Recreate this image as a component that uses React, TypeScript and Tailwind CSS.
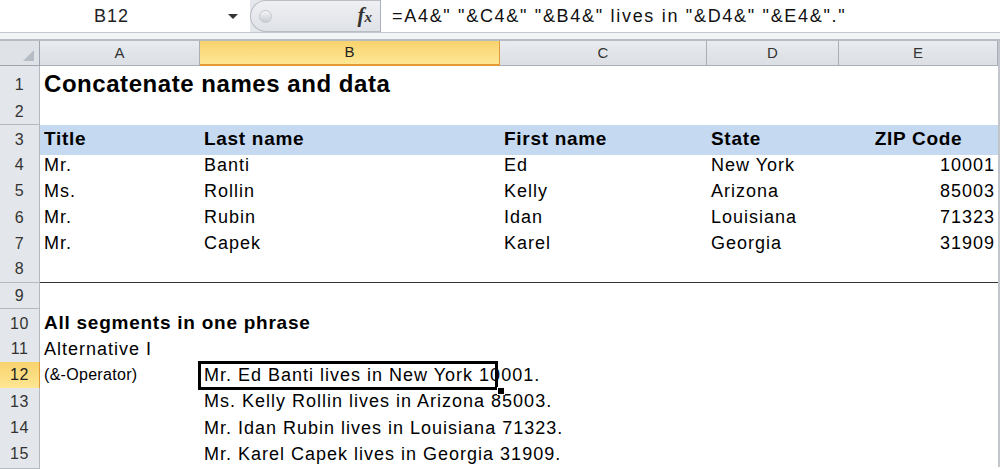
import React from 'react';

const font = { fontFamily: '"Liberation Sans", Arial, sans-serif' };

const cols = ['A', 'B', 'C', 'D', 'E'];
const gridCols = 'grid grid-cols-[40px_160px_300px_207px_132px_159px]';

type Cell = { text?: string; cls?: string; align?: 'right' | 'center' };

const body = 'text-[18px] tracking-[1px] pb-[1px]';
const head = 'font-bold text-[19px] tracking-[0.7px] pb-[1px]';

const rows: { h: string; cells: Cell[]; rowCls?: string; selected?: boolean }[] = [
  { h: 'h-[33px]', cells: [{ text: 'Concatenate names and data', cls: 'text-[24px] font-bold tracking-[0.55px] pb-[3px]' }] },
  { h: 'h-[26.3px]', cells: [] },
  {
    h: 'h-[26.3px]',
    rowCls: 'bg-[#c5d9f1]',
    cells: [
      { text: 'Title', cls: head },
      { text: 'Last name', cls: head },
      { text: 'First name', cls: head },
      { text: 'State', cls: head },
      { text: 'ZIP Code', cls: head, align: 'center' },
    ],
  },
  { h: 'h-[26.3px]', cells: [{ text: 'Mr.' }, { text: 'Banti' }, { text: 'Ed' }, { text: 'New York' }, { text: '10001', align: 'right' }] },
  { h: 'h-[26.3px]', cells: [{ text: 'Ms.' }, { text: 'Rollin' }, { text: 'Kelly' }, { text: 'Arizona' }, { text: '85003', align: 'right' }] },
  { h: 'h-[26.3px]', cells: [{ text: 'Mr.' }, { text: 'Rubin' }, { text: 'Idan' }, { text: 'Louisiana' }, { text: '71323', align: 'right' }] },
  { h: 'h-[26.3px]', cells: [{ text: 'Mr.' }, { text: 'Capek' }, { text: 'Karel' }, { text: 'Georgia' }, { text: '31909', align: 'right' }] },
  { h: 'h-[26.3px]', cells: [], rowCls: 'border-b border-[#333]' },
  { h: 'h-[26.3px]', cells: [] },
  { h: 'h-[26.3px]', cells: [{ text: 'All segments in one phrase', cls: 'font-bold text-[19px] tracking-[0.75px] pb-[1px]' }] },
  { h: 'h-[26.3px]', cells: [{ text: 'Alternative I' }] },
  {
    h: 'h-[26.3px]',
    selected: true,
    cells: [{ text: '(&-Operator)', cls: 'text-[16px] tracking-[0.3px] pb-[3px]' }, { text: 'Mr. Ed Banti lives in New York 10001.' }],
  },
  { h: 'h-[26.3px]', cells: [{}, { text: 'Ms. Kelly Rollin lives in Arizona 85003.' }] },
  { h: 'h-[26.3px]', cells: [{}, { text: 'Mr. Idan Rubin lives in Louisiana 71323.' }] },
  { h: 'h-[26.3px]', cells: [{}, { text: 'Mr. Karel Capek lives in Georgia 31909.' }] },
];

function FormulaBar() {
  return (
    <div className="flex h-[33px] bg-white border-b border-[#c3c8ce]">
      <div className="relative flex w-[250px] items-center pl-[94px] text-[18px] tracking-[1px] text-[#222]">
        B12
        <span className="absolute right-[12px] top-[14px] h-0 w-0 border-x-[5px] border-t-[5px] border-x-transparent border-t-[#333]" />
      </div>
      <div className="flex w-[130px] items-center bg-[#e4e7eb]">
        <div className="relative flex h-[32px] w-full items-center rounded-l-full border border-r-0 border-[#b9bec5] bg-gradient-to-b from-[#eef0f3] to-[#dfe2e7]">
          <span className="ml-[8px] h-[13px] w-[13px] rounded-full bg-gradient-to-b from-[#f4f5f7] to-[#c9cdd3] border border-[#c3c7cd]" />
          <span
            className="ml-auto mr-[8px] text-[21px] font-bold italic text-[#333]"
            style={{ fontFamily: '"Liberation Serif", "Times New Roman", serif' }}
          >
            f<span className="text-[15px]">x</span>
          </span>
        </div>
      </div>
      <div className="flex flex-1 items-center border-l border-[#aab0b8] pl-[11px] text-[18px] tracking-[1.7px] text-[#111]">
        =A4&amp;" "&amp;C4&amp;" "&amp;B4&amp;" lives in "&amp;D4&amp;" "&amp;E4&amp;"."
      </div>
    </div>
  );
}

export default function App() {
  return (
    <div className="w-[1000px] h-[469px] overflow-hidden bg-white" style={font}>
      <FormulaBar />
      <div className="h-[8px] bg-[#f3f4f6] border-b-2 border-[#b7bcc3]" />
      <div className="border-r-2 border-[#c2c6cc]">
        <div className={`${gridCols} h-[25px]`}>
          <div className="relative border-r border-b border-[#9ea5ae] bg-[#dfe3e8]">
            <svg className="absolute right-[5px] bottom-[4px]" width="11" height="11" viewBox="0 0 11 11">
              <polygon points="11,0 11,11 0,11" fill="#b6bcc4" />
            </svg>
          </div>
          {cols.map((c) => (
            <div
              key={c}
              className={
                c === 'B'
                  ? 'flex items-center justify-center border-r border-b-2 border-[#e39a37] bg-gradient-to-b from-[#f8d36c] to-[#fee795] text-[15px] text-[#222]'
                  : 'flex items-center justify-center border-r border-b border-[#a9afb7] bg-gradient-to-b from-[#e8ebef] to-[#dbdfe4] text-[15px] text-[#333]'
              }
            >
              {c}
            </div>
          ))}
        </div>
        {rows.map((r, i) => (
          <div key={i} className={`${gridCols} ${r.h}`}>
            <div
              className={
                r.selected
                  ? 'flex items-center justify-center border-r border-b border-[#e39a37] bg-gradient-to-b from-[#f8d36c] to-[#fee795] text-[16px] tracking-[0.5px] text-[#222]'
                  : 'flex items-center justify-center border-r border-b border-[#b4bac2] bg-[#e3e6ea] text-[16px] tracking-[0.5px] text-[#333]'
              }
            >
              {i + 1}
            </div>
            {cols.map((c, j) => {
              const cell = r.cells[j] || {};
              const isSel = r.selected && c === 'B';
              return (
                <div
                  key={c}
                  className={`relative flex items-end whitespace-nowrap text-black ${
                    cell.align === 'right' ? 'justify-end pr-[3px] pl-[4px]' : cell.align === 'center' ? 'justify-center px-[4px]' : 'px-[4px]'
                  } ${r.rowCls || ''} ${cell.cls || body}`}
                >
                  {cell.text}
                  {isSel && (
                    <>
                      <span className="pointer-events-none absolute -left-[2px] -top-[1px] z-10 h-[29px] w-[300px] border-[3px] border-black" />
                      <span className="absolute -right-[5px] -bottom-[5px] z-20 h-[8px] w-[8px] border border-white bg-black" />
                    </>
                  )}
                </div>
              );
            })}
          </div>
        ))}
      </div>
    </div>
  );
}
